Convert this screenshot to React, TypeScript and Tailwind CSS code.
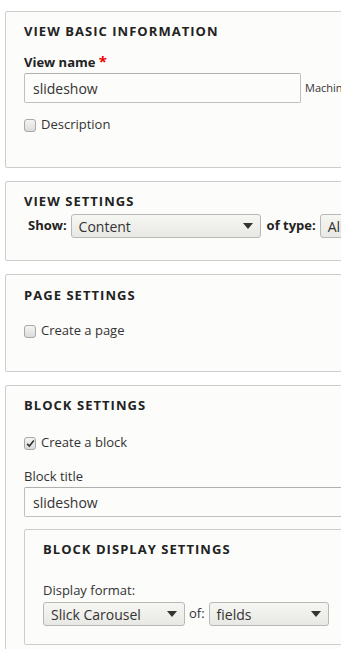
import React from "react"

const font = { fontFamily: '"Open Sans", "DejaVu Sans", sans-serif' }

function Check({ checked = false, label }: { checked?: boolean; label: string }) {
  return (
    <div className="flex items-center h-[20px] text-[13px] text-[#333] whitespace-nowrap">
      <span className="relative w-[12px] h-[13px] rounded-[3px] border border-[#a8a8a8] bg-gradient-to-b from-[#f4f4f4] to-[#dcdcdc] mr-[5px] shrink-0">
        {checked && (
          <svg viewBox="0 0 12 12" className="absolute left-[1px] top-[1px] w-[9px] h-[9px]">
            <path d="M1.5 6.5 L4.5 9.5 L10.5 2" fill="none" stroke="#333" strokeWidth="2.2" />
          </svg>
        )}
      </span>
      {label}
    </div>
  )
}

function Select({ value, w }: { value: string; w: string }) {
  return (
    <div
      className={`${w} h-[24px] flex items-center justify-between rounded-[3px] border border-[#b8b8b8] bg-gradient-to-b from-[#f6f6f3] to-[#e8e8e4] pl-[7px] pr-[7px] text-[14px] text-[#333] shrink-0`}
    >
      <span>{value}</span>
      <svg viewBox="0 0 10 6" className="w-[10px] h-[6px]">
        <path d="M0 0 H10 L5 6 Z" fill="#333" />
      </svg>
    </div>
  )
}

function Heading({ children, pt }: { children: React.ReactNode; pt: string }) {
  return (
    <div className={`${pt} h-[20px] leading-[20px] text-[13px] font-bold uppercase tracking-[0.08em] text-[#222] whitespace-nowrap`}>
      {children}
    </div>
  )
}

const box = "w-[420px] shrink-0 rounded-[2px] border border-[#cdcdcd] bg-[#fcfcfa] px-[18px]"

export default function App() {
  return (
    <div className="w-[341px] h-[649px] overflow-hidden bg-white" style={font}>
      <div className="w-[500px] pl-[5px] pt-[11px] flex flex-col items-start gap-[13px]">
        <div className={`${box} pb-[32px]`}>
          <Heading pt="mt-[9px]">View basic information</Heading>
          <div className="mt-[10px] h-[20px] leading-[20px] text-[13px] font-bold text-[#222]">
            View name <span className="text-[#e00] text-[15px]">*</span>
          </div>
          <div className="mt-[2px] flex items-center whitespace-nowrap">
            <div className="w-[277px] shrink-0 h-[30px] rounded-[2px] border border-[#c0c0c0] border-t-[#b0b0b0] bg-[#fcfcfa] flex items-center px-[8px] text-[14px] text-[#333]">
              slideshow
            </div>
            <span className="ml-[4px] text-[11px] text-[#333]">Machine name: slideshow</span>
          </div>
          <div className="mt-[12px]">
            <Check label="Description" />
          </div>
        </div>

        <div className={`${box} pb-[22px]`}>
          <Heading pt="mt-[9px]">View settings</Heading>
          <div className="mt-[3px] flex items-center text-[13px] text-[#222] pl-[4px] whitespace-nowrap">
            <span className="font-bold mr-[4px]">Show:</span>
            <Select value="Content" w="w-[190px]" />
            <span className="font-bold ml-[6px] mr-[4px]">of type:</span>
            <Select value="All" w="w-[90px]" />
          </div>
        </div>

        <div className={`${box} pb-[30px]`}>
          <Heading pt="mt-[10px]">Page settings</Heading>
          <div className="mt-[16px]">
            <Check label="Create a page" />
          </div>
        </div>

        <div className={`${box} pb-[40px]`}>
          <Heading pt="mt-[9px]">Block settings</Heading>
          <div className="mt-[18px]">
            <Check checked label="Create a block" />
          </div>
          <div className="mt-[13px] h-[20px] leading-[20px] text-[13px] text-[#333]">Block title</div>
          <div className="mt-[1px] w-[380px] h-[30px] rounded-[2px] border border-[#c0c0c0] border-t-[#b0b0b0] bg-[#fcfcfa] flex items-center px-[8px] text-[14px] text-[#333]">
            slideshow
          </div>
          <div className="mt-[12px] w-[380px] rounded-[2px] border border-[#cdcdcd] bg-[#fcfcfa] px-[18px] pb-[18px]">
            <Heading pt="mt-[9px]">Block display settings</Heading>
            <div className="mt-[21px] h-[20px] leading-[20px] text-[13px] text-[#333]">Display format:</div>
            <div className="mt-[2px] flex items-center text-[13px] text-[#333] whitespace-nowrap">
              <Select value="Slick Carousel" w="w-[142px]" />
              <span className="ml-[4px] mr-[4px]">of:</span>
              <Select value="fields" w="w-[120px]" />
            </div>
          </div>
        </div>
      </div>
    </div>
  )
}
